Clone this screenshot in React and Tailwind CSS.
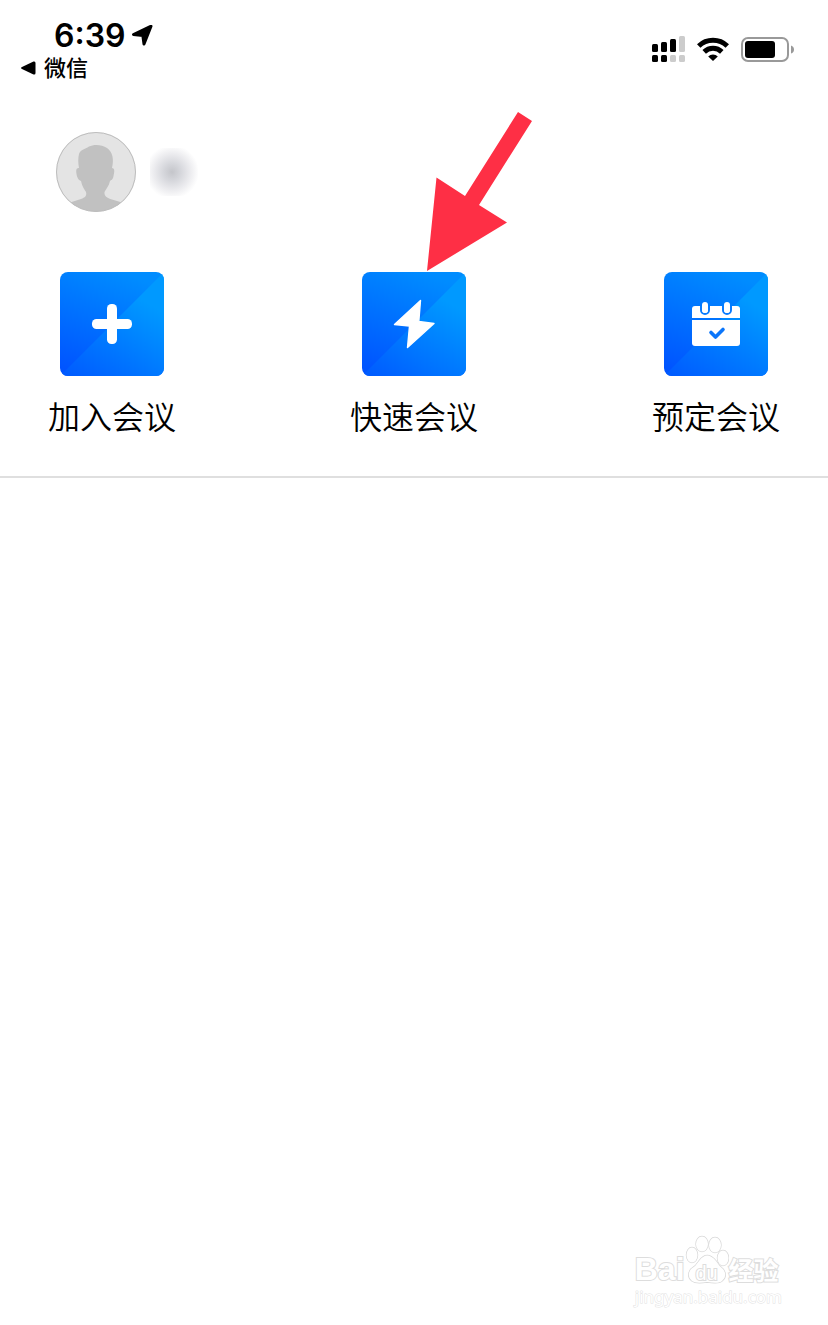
const actions = [
  { id: 'join', label: '加入会议', Icon: PlusIcon },
  { id: 'quick', label: '快速会议', Icon: BoltIcon, highlighted: true },
  { id: 'schedule', label: '预定会议', Icon: CalendarIcon },
]

export default function App() {
  return (
    <div className="min-h-screen bg-white text-black flex flex-col font-['Inter','Noto_Sans_CJK_SC',sans-serif]">
      <StatusBar />

      <main className="border-b-2 border-[#dfdfdf]">
        <div className="flex items-center gap-[14px] px-14 pt-[50px]">
          <button type="button" aria-label="头像" className="rounded-full">
            <Avatar />
          </button>
          <div className="size-12 rounded-lg bg-[radial-gradient(circle_at_46%_50%,#c4c5ca_0%,#d6d7dc_25%,#ececef_52%,#ffffff_76%)]" />
        </div>

        <nav className="flex justify-between px-12 pt-15 pb-9">
          {actions.map((action) => (
            <Action key={action.id} {...action} />
          ))}
        </nav>
      </main>

      <footer className="mt-auto flex justify-end pr-[46px] pb-4">
        <Watermark />
      </footer>
    </div>
  )
}

function StatusBar() {
  return (
    <header className="flex justify-between items-start pl-5 pr-[34px] pt-[18px]">
      <div>
        <div className="flex items-center gap-[6px] pl-[34px] h-9">
          <span className="text-[32px] leading-9 font-semibold">6:39</span>
          <svg width="21" height="22" viewBox="0 0 21 22" aria-hidden="true">
            <path
              d="M1.5 9.5 19 1.2 12 19 10.800 10.400Z"
              fill="#000"
              stroke="#000"
              strokeWidth="3"
              strokeLinejoin="round"
            />
          </svg>
        </div>
        <a href="#" className="flex items-center gap-2 text-[22px] leading-7 font-medium">
          <svg width="16" height="14" viewBox="0 0 16 14" aria-hidden="true">
            <path d="M2 6 13.5.6Q15.5 0 15.5 2V12Q15.5 14 13.5 13.4L2 8Q0 7 2 6Z" fill="#000" />
          </svg>
          微信
        </a>
      </div>

      <div className="flex items-center gap-3 pt-[18px]">
        <svg width="33" height="26" viewBox="0 0 33 26" aria-hidden="true">
          <g fill="#000">
            <rect x="0" y="8" width="6" height="8" rx="1.5" />
            <rect x="9" y="6" width="6" height="10" rx="1.5" />
            <rect x="18" y="3" width="6" height="13" rx="1.5" />
            <rect x="0" y="19" width="6" height="7" rx="1.5" />
            <rect x="9" y="19" width="6" height="7" rx="1.5" />
          </g>
          <g fill="#cccccc">
            <rect x="27" y="0" width="6" height="16" rx="1.5" />
            <rect x="18" y="19" width="6" height="7" rx="1.5" />
            <rect x="27" y="19" width="6" height="7" rx="1.5" />
          </g>
        </svg>
        <svg width="32" height="24" viewBox="0 0 32 24" aria-hidden="true">
          <g fill="none" stroke="#000" strokeWidth="5">
            <path d="M1.7 9A20.5 20.5 0 0 1 30.3 9" />
            <path d="M7.2 14.9A12.6 12.6 0 0 1 24.8 14.9" />
          </g>
          <path d="M16 24 11.2 19.4A6.8 6.8 0 0 1 20.8 19.4Z" fill="#000" />
        </svg>
        <svg width="53" height="25" viewBox="0 0 53 25" aria-hidden="true">
          <rect x="1" y="1" width="46" height="23" rx="6" fill="none" stroke="#999" strokeWidth="2" />
          <rect x="4" y="4" width="30" height="17" rx="3" fill="#000" />
          <path d="M50 8.5Q53 9.5 53 12.5T50 16.5Z" fill="#999" />
        </svg>
      </div>
    </header>
  )
}

function Avatar() {
  return (
    <svg width="80" height="80" viewBox="0 0 80 80" aria-hidden="true">
      <defs>
        <clipPath id="avatar-clip">
          <circle cx="40" cy="40" r="39.5" />
        </clipPath>
      </defs>
      <circle cx="40" cy="40" r="40" fill="#e4e4e4" />
      <path
        clipPath="url(#avatar-clip)"
        fill="#c1c1c1"
        d="M23 36C22 31 22 26 23 22C24 18 29 17 33 14.5C38 12 46 12.5 51 16C57 20 58 28 56 36C59 36 58.5 40 57.5 44C57 48 55 48 54 49C53 54 50 57 48.5 60C48 64 51 66 56 67.5L66 70.5V80H14V70.5L25 67C29 65.5 31 64 30 60C28 57 26 54 25 49C22 48 21 45 20.5 42C20 38 20 36 23 36Z"
      />
      <circle cx="40" cy="40" r="39.5" fill="none" stroke="#bdbdbd" />
    </svg>
  )
}

function Action({ label, Icon, highlighted }) {
  return (
    <button type="button" className="relative w-32 flex flex-col items-center gap-5">
      {highlighted && <Pointer />}
      <svg width="104" height="104" viewBox="0 0 104 104" aria-hidden="true">
        <TileBackground />
        <Icon />
      </svg>
      <span className="text-[32px] leading-11 font-[350] whitespace-nowrap">{label}</span>
    </button>
  )
}

function Pointer() {
  return (
    <svg className="absolute bottom-full left-[77px]" width="106" height="160" viewBox="0 0 106 160" aria-hidden="true">
      <path d="M0 159 9.5 65.5 38 84 91 0 105 9 52 93 80 110.5Z" fill="#fe2f45" />
    </svg>
  )
}

function TileBackground() {
  return (
    <>
      <defs>
        <linearGradient id="tile-upper" x1="0.6" y1="0" x2="0.2" y2="1">
          <stop offset="0" stopColor="#008cff" />
          <stop offset="1" stopColor="#0054ff" />
        </linearGradient>
        <linearGradient id="tile-lower" x1="0.85" y1="0.3" x2="0.3" y2="1.2">
          <stop offset="0" stopColor="#0099ff" />
          <stop offset="1" stopColor="#0058ff" />
        </linearGradient>
        <clipPath id="tile-clip">
          <rect width="104" height="104" rx="8" />
        </clipPath>
      </defs>
      <g clipPath="url(#tile-clip)">
        <rect width="104" height="104" fill="url(#tile-upper)" />
        <path d="M104 0V104H0Z" fill="url(#tile-lower)" />
      </g>
    </>
  )
}

function PlusIcon() {
  return (
    <g fill="#fff">
      <rect x="32" y="47" width="40" height="10" rx="4.5" />
      <rect x="47" y="32" width="10" height="40" rx="4.5" />
    </g>
  )
}

function BoltIcon() {
  return (
    <path
      d="M58.5 28.500 32.500 52.500 47.500 54 45.500 75.500 72 51.500 56.800 49.500Z"
      fill="#fff"
      stroke="#fff"
      strokeWidth="1.4"
      strokeLinejoin="round"
    />
  )
}

function CalendarIcon() {
  return (
    <>
      <path d="M31 34H73Q76 34 76 37V46H28V37Q28 34 31 34Z" fill="#fff" />
      <path d="M28 48H76V71Q76 74 73 74H31Q28 74 28 71Z" fill="#fff" />
      <g fill="none" stroke="#087bff" strokeWidth="2">
        <path d="M37 34V38A4 4 0 0 0 45 38V34" />
        <path d="M59 34V38A4 4 0 0 0 67 38V34" />
      </g>
      <rect x="38" y="30" width="6" height="11" rx="3" fill="#fff" />
      <rect x="60" y="30" width="6" height="11" rx="3" fill="#fff" />
      <path
        d="M47 60.5 51.5 65 59 57.5"
        fill="none"
        stroke="#0b76fa"
        strokeWidth="3.6"
        strokeLinecap="round"
        strokeLinejoin="round"
      />
    </>
  )
}

function Watermark() {
  return (
    <div className="text-white [-webkit-text-stroke:2px_#dddddd] [paint-order:stroke_fill]">
      <div className="flex items-end">
        <span className="text-[32px] leading-8 font-bold font-['Liberation_Sans',sans-serif]">Bai</span>
        <span className="relative flex justify-center w-11">
          <svg width="44" height="50" viewBox="0 0 44 50" fill="#fff" stroke="#d8d8d8" strokeWidth="1.4" aria-hidden="true">
            <path d="M14 26Q22 15 31 26Q34 31 38 34Q43 41 37 46Q34 49 22 47Q11 49 7 46Q1 41 6 34Q11 31 14 26Z" />
            <ellipse cx="7" cy="20" rx="5.5" ry="7.5" />
            <ellipse cx="17" cy="9" rx="6" ry="7.5" />
            <ellipse cx="30" cy="10" rx="6" ry="7.5" />
            <ellipse cx="38" cy="23" rx="5.5" ry="7.5" />
          </svg>
          <span className="absolute bottom-0 text-xl leading-6 font-['Liberation_Sans',sans-serif]">du</span>
        </span>
        <span className="text-[25px] leading-8 font-bold font-['Noto_Sans_CJK_SC',sans-serif]">经验</span>
      </div>
      <div className="text-[17px] leading-6 [-webkit-text-stroke:1px_#e2e2e2] font-['Noto_Sans',sans-serif]">jingyan.baidu.com</div>
    </div>
  )
}
